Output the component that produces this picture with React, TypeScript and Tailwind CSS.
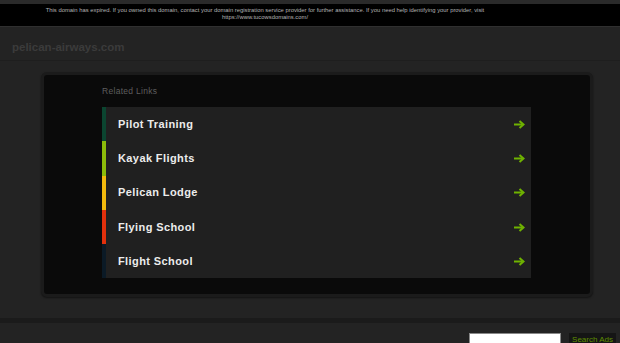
import React from 'react';

const LINKS = [
  { label: 'Pilot Training', bar: 'bg-[#0b4530]' },
  { label: 'Kayak Flights', bar: 'bg-[#8cbc0a]' },
  { label: 'Pelican Lodge', bar: 'bg-[#f2b90d]' },
  { label: 'Flying School', bar: 'bg-[#e2300c]' },
  { label: 'Flight School', bar: 'bg-[#0b1a26]' },
];

const Arrow: React.FC = () => (
  <svg width="11" height="9" viewBox="0 0 11 9" className="text-[#6fb300]">
    <path d="M0 4.5 H8" stroke="currentColor" strokeWidth="2" />
    <path d="M5.5 1 L9.5 4.5 L5.5 8" fill="none" stroke="currentColor" strokeWidth="2" />
  </svg>
);

const App: React.FC = () => {
  return (
    <div className="w-[620px] h-[343px] overflow-hidden bg-[#232323] font-['Liberation_Sans',Arial,sans-serif]">
      {/* Expired notice */}
      <div className="h-[4px] bg-[#2a2a2a]" />
      <div className="h-[23px] bg-black border-b border-[#2f2f2f] pt-[3px]">
        <div className="w-[530px] text-center text-[5.85px] leading-[7px] text-[#b3b3b3]">
          <p>This domain has expired. If you owned this domain, contact your domain registration service provider for further assistance. If you need help identifying your provider, visit</p>
          <p>https://www.tucowsdomains.com/</p>
        </div>
      </div>

      {/* Header */}
      <div className="h-[34px] border-b border-[#1e1e1e] pl-[12px] pt-[8px] flex items-center text-[11.5px] font-bold text-[#3b3b3b]">
        pelican-airways.com
      </div>

      {/* Main panel */}
      <div className="ml-[41px] mt-[11px] w-[552px] h-[225px] rounded-[6px] border-[3px] border-[#1b1b1b] bg-[#0a0a0a] shadow-[0_1px_2px_rgba(0,0,0,0.5)] pl-[58px] pt-[11px]">
        <p className="text-[8.5px] leading-[10px] text-[#5e5e5e] tracking-[0.3px]">Related Links</p>
        <ul className="mt-[11px] w-[429px] flex flex-col">
          {LINKS.map((link) => (
            <li key={link.label} className="h-[34.3px] flex items-stretch bg-[#202020]">
              <span className={`w-[4px] ${link.bar}`} />
              <span className="flex-1 flex items-center justify-between pl-[12px] pr-[6px]">
                <span className="text-[11px] font-bold text-[#ececec] tracking-[0.4px]">{link.label}</span>
                <Arrow />
              </span>
            </li>
          ))}
        </ul>
      </div>

      {/* Bottom band */}
      <div className="mt-[21px] h-[5px] bg-[#1b1b1b]" />
      <div className="flex justify-end items-start gap-[8px] pt-[10px] pr-[4px]">
        <div className="w-[92px] h-[14px] bg-white border border-[#888]" />
        <div className="h-[14px] px-[3px] bg-[#151515] text-[8px] leading-[14px] text-[#5f8f00]">Search Ads</div>
      </div>
    </div>
  );
};

export default App;
